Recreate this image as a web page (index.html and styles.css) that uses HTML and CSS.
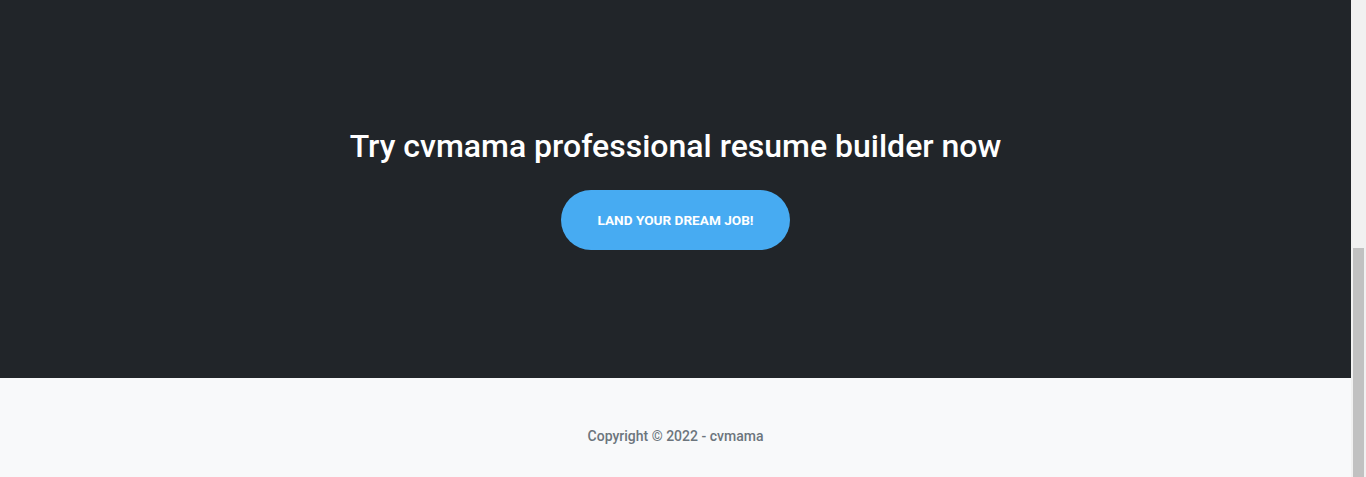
FILE: index.html
```html
<!DOCTYPE html>
<html lang="en">
<head>
<meta charset="utf-8">
<title>cvmama</title>
<link rel="stylesheet" href="styles.css">
</head>
<body>
<div class="page">
  <section class="cta">
    <h2 class="cta-title">Try cvmama professional resume builder now</h2>
    <a class="cta-btn" href="#">Land your dream job!</a>
  </section>
  <footer class="footer">
    <p class="copyright">Copyright © 2022 - cvmama</p>
  </footer>
</div>
<div class="scrollbar"><div class="scroll-thumb"></div></div>
</body>
</html>
```
FILE: styles.css
```css
html, body {
  margin: 0;
  padding: 0;
  height: 100%;
  overflow: hidden;
}
body {
  display: flex;
  font-family: Roboto, "Liberation Sans", sans-serif;
}
.page {
  flex: 1;
  display: flex;
  flex-direction: column;
}
.cta {
  background: #212529;
  height: 378px;
  display: flex;
  flex-direction: column;
  align-items: center;
  padding-top: 126px;
  box-sizing: border-box;
}
.cta-title {
  margin: 0;
  color: #fff;
  font-size: 32px;
  font-weight: 500;
  line-height: 40px;
}
.cta-btn {
  margin-top: 24px;
  width: 229px;
  height: 60px;
  border-radius: 30px;
  background: #47abf2;
  color: #fff;
  text-decoration: none;
  text-transform: uppercase;
  font-size: 13.6px;
  font-weight: 700;
  display: flex;
  align-items: center;
  justify-content: center;
}
.footer {
  flex: 1;
  background: #f8f9fa;
  display: flex;
  justify-content: center;
  padding-top: 48px;
  box-sizing: border-box;
}
.copyright {
  margin: 0;
  color: #6c757d;
  font-size: 14px;
  font-weight: 500;
  line-height: 20px;
}
.scrollbar {
  width: 15px;
  background: #f1f1f1;
  display: flex;
  flex-direction: column;
  justify-content: flex-end;
  align-items: center;
}
.scroll-thumb {
  width: 11px;
  height: 229px;
  background: #c1c1c1;
}
```
